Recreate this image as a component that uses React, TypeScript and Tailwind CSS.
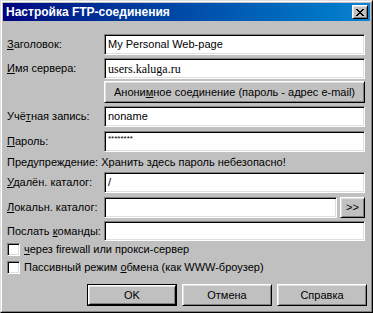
import React from "react";

const FIELD =
  "bg-white border border-t-[#808080] border-l-[#808080] border-r-white border-b-white shadow-[inset_1px_1px_0_#000,inset_-1px_-1px_0_#dfdfdf] flex items-center pl-[3px] overflow-hidden whitespace-nowrap";
const RAISED =
  "bg-[#c0c0c0] border border-t-white border-l-white border-r-black border-b-black shadow-[inset_1px_1px_0_#dfdfdf,inset_-1px_-1px_0_#808080] flex items-center justify-center";

function Label({ children }: { children: React.ReactNode }) {
  return <div className="w-[97px] shrink-0 whitespace-nowrap">{children}</div>;
}

function Check({ children }: { children: React.ReactNode }) {
  return (
    <div className="flex items-center h-[13px]">
      <div className="w-[13px] h-[13px] bg-white border border-t-[#808080] border-l-[#808080] border-r-white border-b-white shadow-[inset_1px_1px_0_#000,inset_-1px_-1px_0_#dfdfdf]" />
      <div className="ml-[4px] whitespace-nowrap">{children}</div>
    </div>
  );
}

export default function App() {
  return (
    <div className="w-[373px] h-[313px] bg-[#c0c0c0] border border-t-[#dfdfdf] border-l-[#dfdfdf] border-r-black border-b-black font-['Liberation_Sans',Arial,sans-serif] text-[11px] text-black leading-none">
      <div className="w-full h-full border border-t-white border-l-white border-r-[#808080] border-b-[#808080] p-px flex flex-col">
        <div className="h-[18px] shrink-0 bg-linear-to-r from-[#000080] to-[#1084d0] flex items-center justify-between pl-[3px] pr-[2px]">
          <span className="text-white font-bold text-[12px] whitespace-nowrap">Настройка FTP-соединения</span>
          <div className={`${RAISED} w-[16px] h-[14px]`}>
            <svg width="8" height="7" viewBox="0 0 8 7" shapeRendering="crispEdges">
              <path d="M0 0h2v1H0zM6 0h2v1H6zM1 1h2v1H1zM5 1h2v1H5zM2 2h4v1H2zM3 3h2v1H3zM2 4h4v1H2zM1 5h2v1H1zM5 5h2v1H5zM0 6h2v1H0zM6 6h2v1H6z" fill="#000" />
            </svg>
          </div>
        </div>

        <div className="pl-[4px] pr-[5px] flex flex-col">
          <div className="flex items-center mt-[13px]">
            <Label><u>З</u>аголовок:</Label>
            <div className={`${FIELD} h-[21px] flex-1`}>My Personal Web-page</div>
          </div>
          <div className="flex items-center mt-[3px]">
            <Label><u>И</u>мя сервера:</Label>
            <div className={`${FIELD} h-[21px] flex-1 font-['Liberation_Serif',serif] text-[12px]`}>users.kaluga.ru</div>
          </div>
          <div className="flex items-center mt-[2px]">
            <Label>{""}</Label>
            <div className={`${RAISED} h-[22px] flex-1 whitespace-nowrap`}>
              Анони<u>м</u>ное соединение (пароль - адрес e-mail)
            </div>
          </div>
          <div className="flex items-center mt-[3px]">
            <Label>Учё<u>т</u>ная запись:</Label>
            <div className={`${FIELD} h-[21px] flex-1`}>noname</div>
          </div>
          <div className="flex items-center mt-[4px]">
            <Label><u>П</u>ароль:</Label>
            <div className={`${FIELD} h-[21px] flex-1 !items-start pt-[3px] text-[8px]`}>********</div>
          </div>
          <div className="h-[20px] flex items-center whitespace-nowrap">
            Предупреждение: Хранить здесь пароль небезопасно!
          </div>
          <div className="flex items-center">
            <Label><u>У</u>далён. каталог:</Label>
            <div className={`${FIELD} h-[21px] flex-1`}>/</div>
          </div>
          <div className="flex items-center mt-[4px]">
            <Label><u>Л</u>окальн. каталог:</Label>
            <div className={`${FIELD} h-[21px] flex-1`}></div>
            <div className={`${RAISED} ml-[3px] w-[25px] h-[21px]`}>&gt;&gt;</div>
          </div>
          <div className="flex items-center mt-[3px]">
            <Label>Послать <u>к</u>оманды:</Label>
            <div className={`${FIELD} h-[20px] flex-1`}></div>
          </div>
          <div className="mt-[2px]">
            <Check><u>ч</u>ерез firewall или прокси-сервер</Check>
          </div>
          <div className="mt-[5px]">
            <Check>Пассивный режим <u>о</u>бмена (как WWW-броузер)</Check>
          </div>
          <div className="flex justify-end gap-[5px] mt-[10px] -mr-[2px]">
            <div className="w-[90px] h-[22px] border border-black">
              <div className={`${RAISED} w-full h-full`}>OK</div>
            </div>
            <div className={`${RAISED} w-[90px] h-[22px]`}>Отмена</div>
            <div className={`${RAISED} w-[90px] h-[22px]`}>Справка</div>
          </div>
        </div>
      </div>
    </div>
  );
}
